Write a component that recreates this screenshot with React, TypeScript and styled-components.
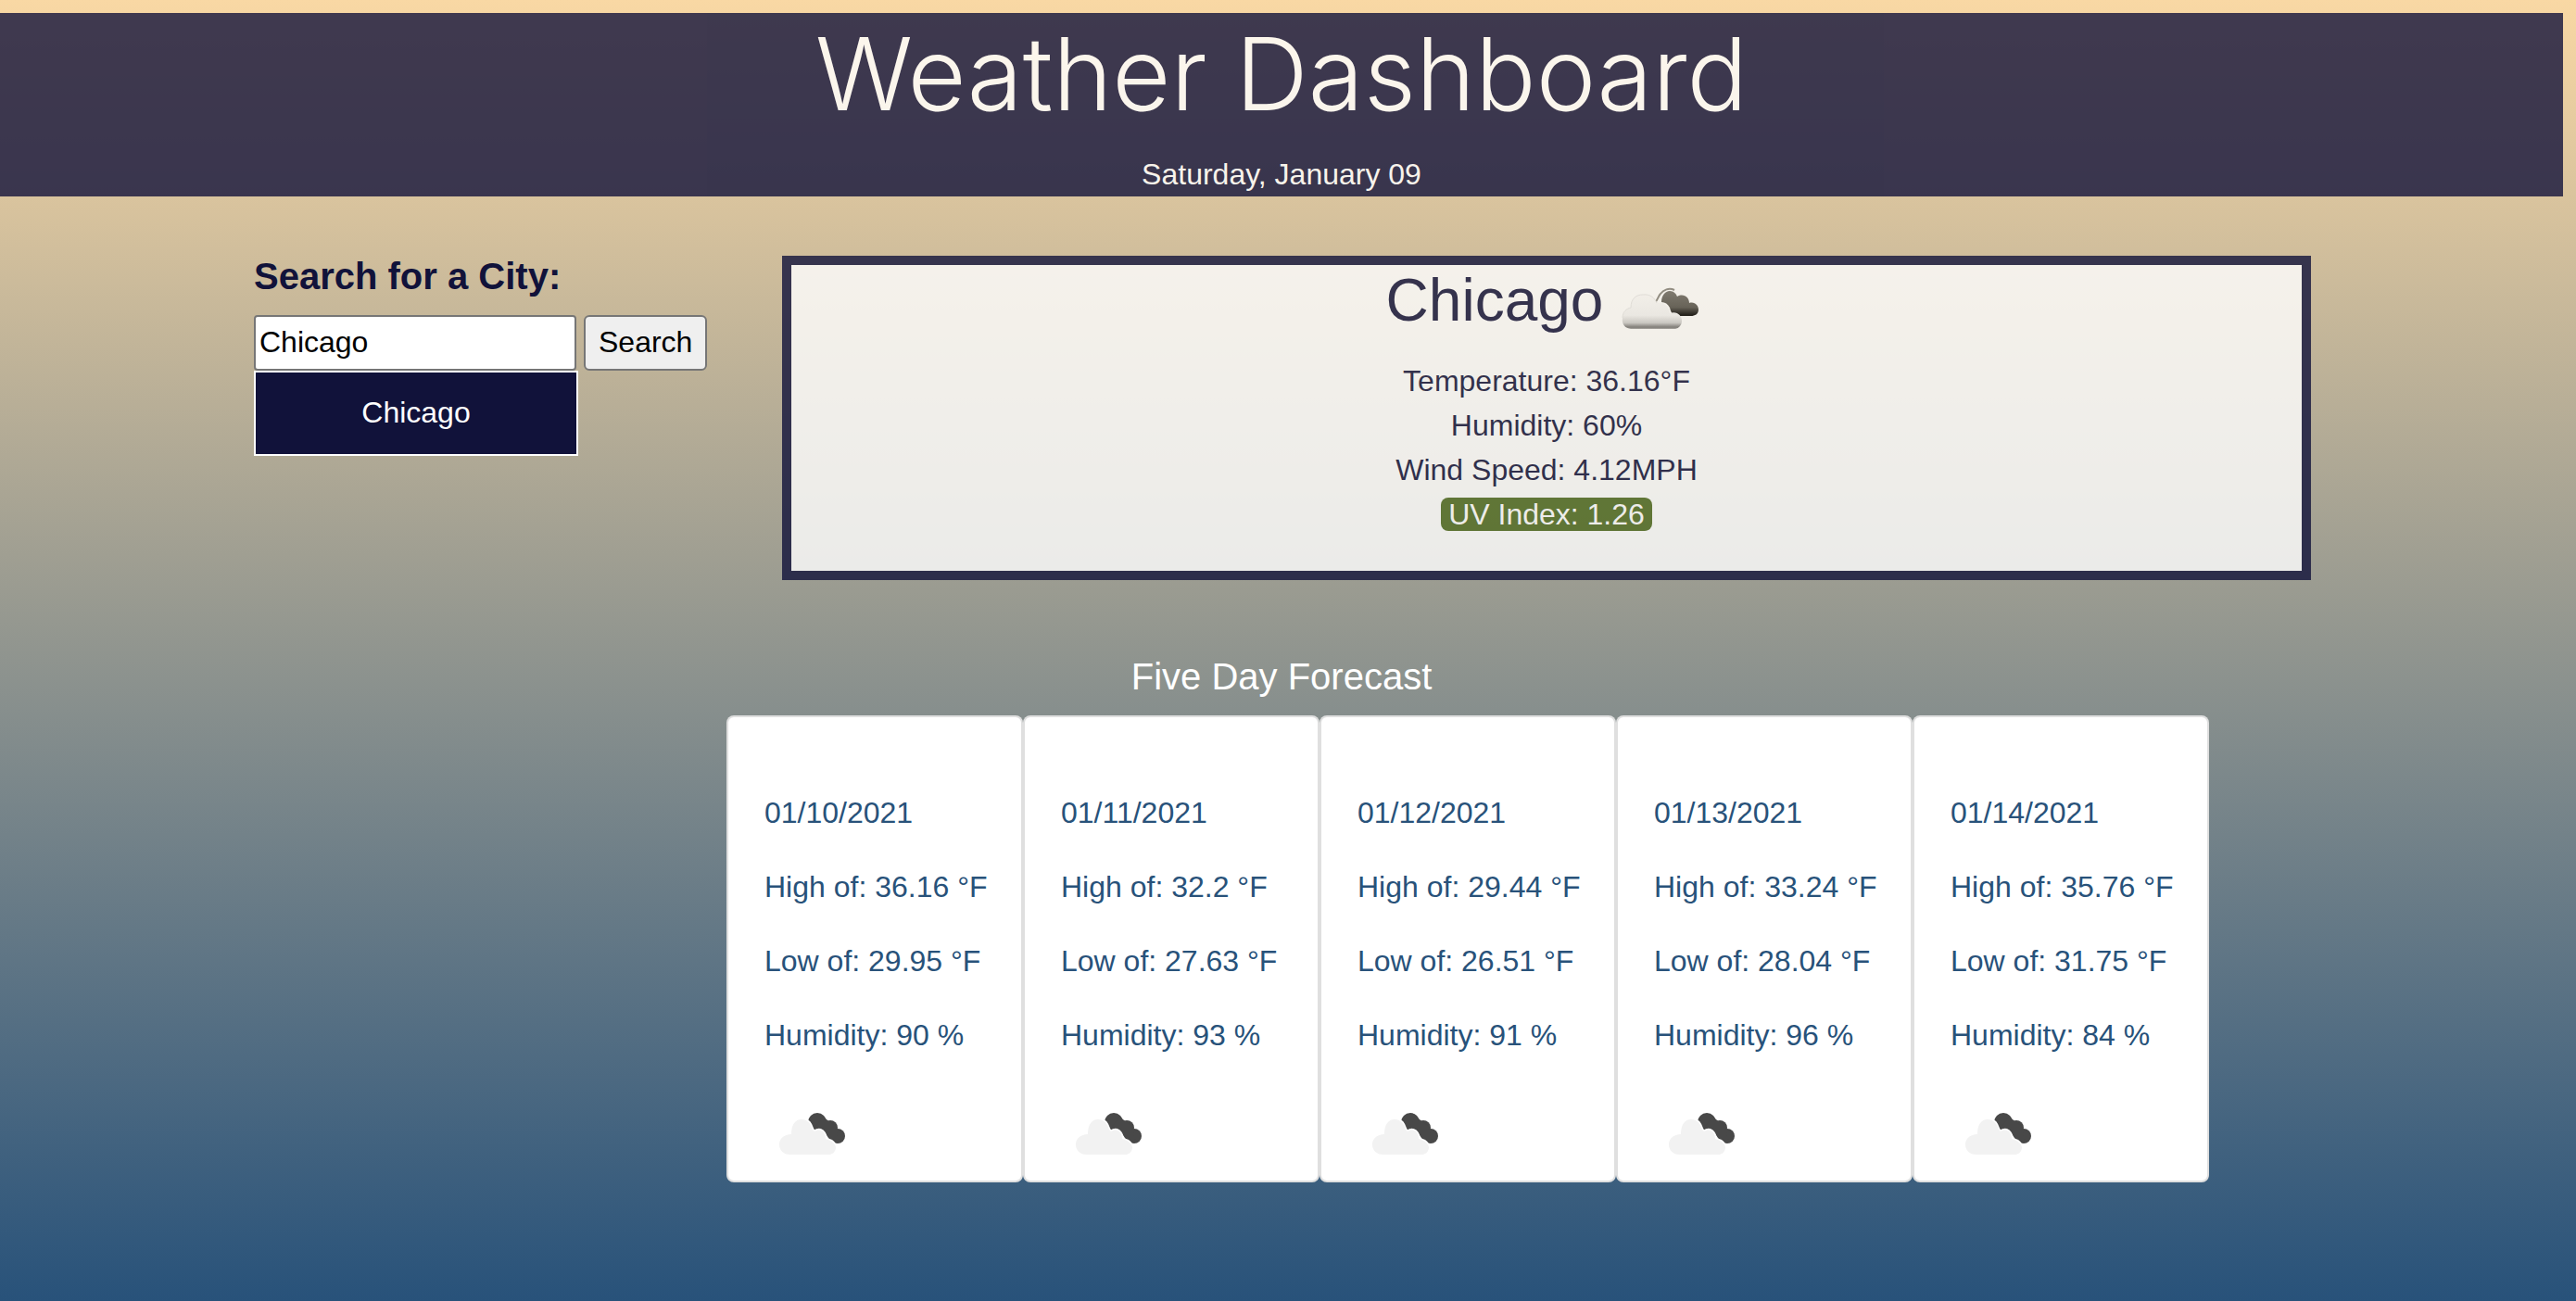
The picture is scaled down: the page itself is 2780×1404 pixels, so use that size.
import React, { useState } from "react";
import styled, { createGlobalStyle } from "styled-components";

const GlobalStyle = createGlobalStyle`
  *, *::before, *::after { box-sizing: border-box; }
  html { min-height: 100%; }
  body {
    min-height: 100vh;
    margin: 0;
    padding: 14px 14px 0 0;
    background: linear-gradient(to bottom, #f9d8a4, #28527a) no-repeat;
    color: #11123a;
    font: 32px/48px "Liberation Sans", Arial, sans-serif;
  }
`;

const Header = styled.header`
  background: #11123a;
  color: #ffffff;
  opacity: 0.8;
  text-align: center;
`;

const Title = styled.h1`
  margin: 0 0 20px;
  font-family: Inter, "Liberation Sans", sans-serif;
  font-size: 109px;
  line-height: 130px;
  font-weight: 300;
`;

const Today = styled.p`
  margin: 0;
`;

const Container = styled.main`
  width: 100%;
  max-width: 2280px;
  margin: 64px auto 0;
`;

const Row = styled.div`
  display: grid;
  grid-template-columns: 1fr 3fr;
`;

const Column = styled.section`
  padding: 0 29px 0 31px;
`;

const SearchForm = styled.form`
  display: grid;
  grid-template-columns: 348px max-content;
  column-gap: 8px;
`;

const SearchLabel = styled.label`
  grid-column: 1 / -1;
  margin-bottom: 20px;
  font-size: 40px;
  line-height: 44px;
  font-weight: 700;
`;

const SearchInput = styled.input`
  height: 60px;
  min-width: 0;
  padding: 0 4px 2px;
  border: 2px solid #767676;
  border-radius: 4px;
  background: #ffffff;
  color: #000000;
  font: inherit;
`;

const SearchButton = styled.button`
  height: 60px;
  padding: 0 14px 2px;
  border: 2px solid #767676;
  border-radius: 6px;
  background: #efefef;
  color: #000000;
  font: inherit;
`;

const HistoryButton = styled.button`
  display: block;
  width: 350px;
  height: 92px;
  padding: 0 0 2px;
  border: 2px solid #ffffff;
  background: #11123a;
  color: #ffffff;
  font: inherit;
`;

const Current = styled.article`
  min-height: 350px;
  border: 10px solid #11123a;
  background: #ffffff;
  opacity: 0.8;
  text-align: center;
`;

const City = styled.h2`
  display: flex;
  justify-content: center;
  align-items: center;
  gap: 12px;
  height: 76px;
  margin: 0 0 25px;
  font-size: 64px;
  font-weight: 400;
`;

const Reading = styled.p`
  margin: 0;
`;

const UvBadge = styled.span`
  display: inline-block;
  padding: 0 8px;
  border-radius: 8px;
  background: #4f6b20;
  color: #ffffff;
  line-height: 36px;
`;

const ForecastTitle = styled.h3`
  margin: 80px 0 18px;
  color: #ffffff;
  font-size: 40px;
  font-weight: 400;
  text-align: center;
`;

const Forecast = styled.div`
  display: grid;
  grid-template-columns: repeat(5, 320px);
  padding-left: 541px;
`;

const DayCard = styled.article`
  height: 504px;
  padding: 79px 0 0 39px;
  border: 2px solid rgba(0, 0, 0, 0.125);
  border-radius: 8px;
  background: #ffffff;
  color: #28527a;
`;

const DayLine = styled.p`
  margin: 0 0 32px;
`;

const Icon = styled.svg`
  display: block;
  width: 100px;
  height: 100px;
`;

function ShadedClouds() {
  return (
    <Icon viewBox="7 -6 100 100" role="img" aria-label="Broken clouds">
      <defs>
        <linearGradient id="pale" x1="0" y1="0" x2="0" y2="1">
          <stop offset="0" stopColor="#fcfcfc" />
          <stop offset="0.6" stopColor="#f4f4f4" />
          <stop offset="0.82" stopColor="#cccccc" />
          <stop offset="0.95" stopColor="#707070" />
          <stop offset="1" stopColor="#a5a5a5" />
        </linearGradient>
        <linearGradient id="dark" x1="0" y1="0" x2="0" y2="1">
          <stop offset="0" stopColor="#6e6c66" />
          <stop offset="0.65" stopColor="#504e48" />
          <stop offset="0.95" stopColor="#000000" />
        </linearGradient>
      </defs>
      <path d="M58 46C58 39 62 34 67 34C71 34 74 37 75 40C82 36 88 41 88 47C94 45 98 50 98 54C98 59 94 61 90 61H72C69 58 68 56 67 52C65 48 62 46 58 46Z" fill="url(#dark)" />
      <path d="M51 46C54 45 54 40 57 37C60 33 66 30 72 33" fill="none" stroke="#85837c" strokeWidth="2" />
      <path d="M25 75C18 74 15 69 16 63C16 57 20 53 25 52C25 42 31 38 38 38C46 37 51 42 53 47C61 46 66 51 67 58C75 55 80 61 80 66C80 71 77 74 73 75Z" fill="url(#pale)" />
      <path d="M16 63C16 57 20 53 25 52C25 42 31 38 38 38C46 37 51 42 53 47" fill="none" stroke="#e6e6e6" strokeWidth="1" />
    </Icon>
  );
}

function FlatClouds() {
  return (
    <Icon viewBox="1 -2 100 100" role="img" aria-label="Broken clouds">
      <g fill="#484848">
        <circle cx="58" cy="36" r="10" />
        <circle cx="72" cy="42" r="8" />
        <circle cx="80" cy="51" r="8" />
        <path d="M54 44L64 30L77 40L82 58L72 56L64 44Z" />
      </g>
      <path
        d="M29 71C21 71 17 66 17 60C17 54 22 49 30 49C30 39 34 33 41 33C47 33 51 37 53 44L55 46C61 42 67 46 67 54C74 56 78 59 78 64C77 69 74 71 70 71Z"
        fill="#f2f2f2"
        stroke="#ffffff"
        strokeWidth="3"
        paintOrder="stroke"
      />
    </Icon>
  );
}

const days = [
  { date: "01/10/2021", high: "36.16", low: "29.95", humidity: 90 },
  { date: "01/11/2021", high: "32.2", low: "27.63", humidity: 93 },
  { date: "01/12/2021", high: "29.44", low: "26.51", humidity: 91 },
  { date: "01/13/2021", high: "33.24", low: "28.04", humidity: 96 },
  { date: "01/14/2021", high: "35.76", low: "31.75", humidity: 84 },
];

export default function App() {
  const [query, setQuery] = useState("Chicago");

  return (
    <>
      <GlobalStyle />
      <Header>
        <Title>Weather Dashboard</Title>
        <Today>Saturday, January 09</Today>
      </Header>
      <Container>
        <Row>
          <Column>
            <SearchForm onSubmit={(event) => event.preventDefault()}>
              <SearchLabel htmlFor="city">Search for a City:</SearchLabel>
              <SearchInput id="city" value={query} onChange={(event) => setQuery(event.target.value)} />
              <SearchButton type="submit">Search</SearchButton>
            </SearchForm>
            <HistoryButton type="button" onClick={() => setQuery("Chicago")}>Chicago</HistoryButton>
          </Column>
          <Column>
            <Current>
              <City>Chicago <ShadedClouds /></City>
              <Reading>Temperature: 36.16°F</Reading>
              <Reading>Humidity: 60%</Reading>
              <Reading>Wind Speed: 4.12MPH</Reading>
              <Reading><UvBadge>UV Index: 1.26</UvBadge></Reading>
            </Current>
          </Column>
        </Row>
        <ForecastTitle>Five Day Forecast</ForecastTitle>
        <Forecast>
          {days.map((day) => (
            <DayCard key={day.date}>
              <DayLine>{day.date}</DayLine>
              <DayLine>High of: {day.high} °F</DayLine>
              <DayLine>Low of: {day.low} °F</DayLine>
              <DayLine>Humidity: {day.humidity} %</DayLine>
              <FlatClouds />
            </DayCard>
          ))}
        </Forecast>
      </Container>
    </>
  );
}
